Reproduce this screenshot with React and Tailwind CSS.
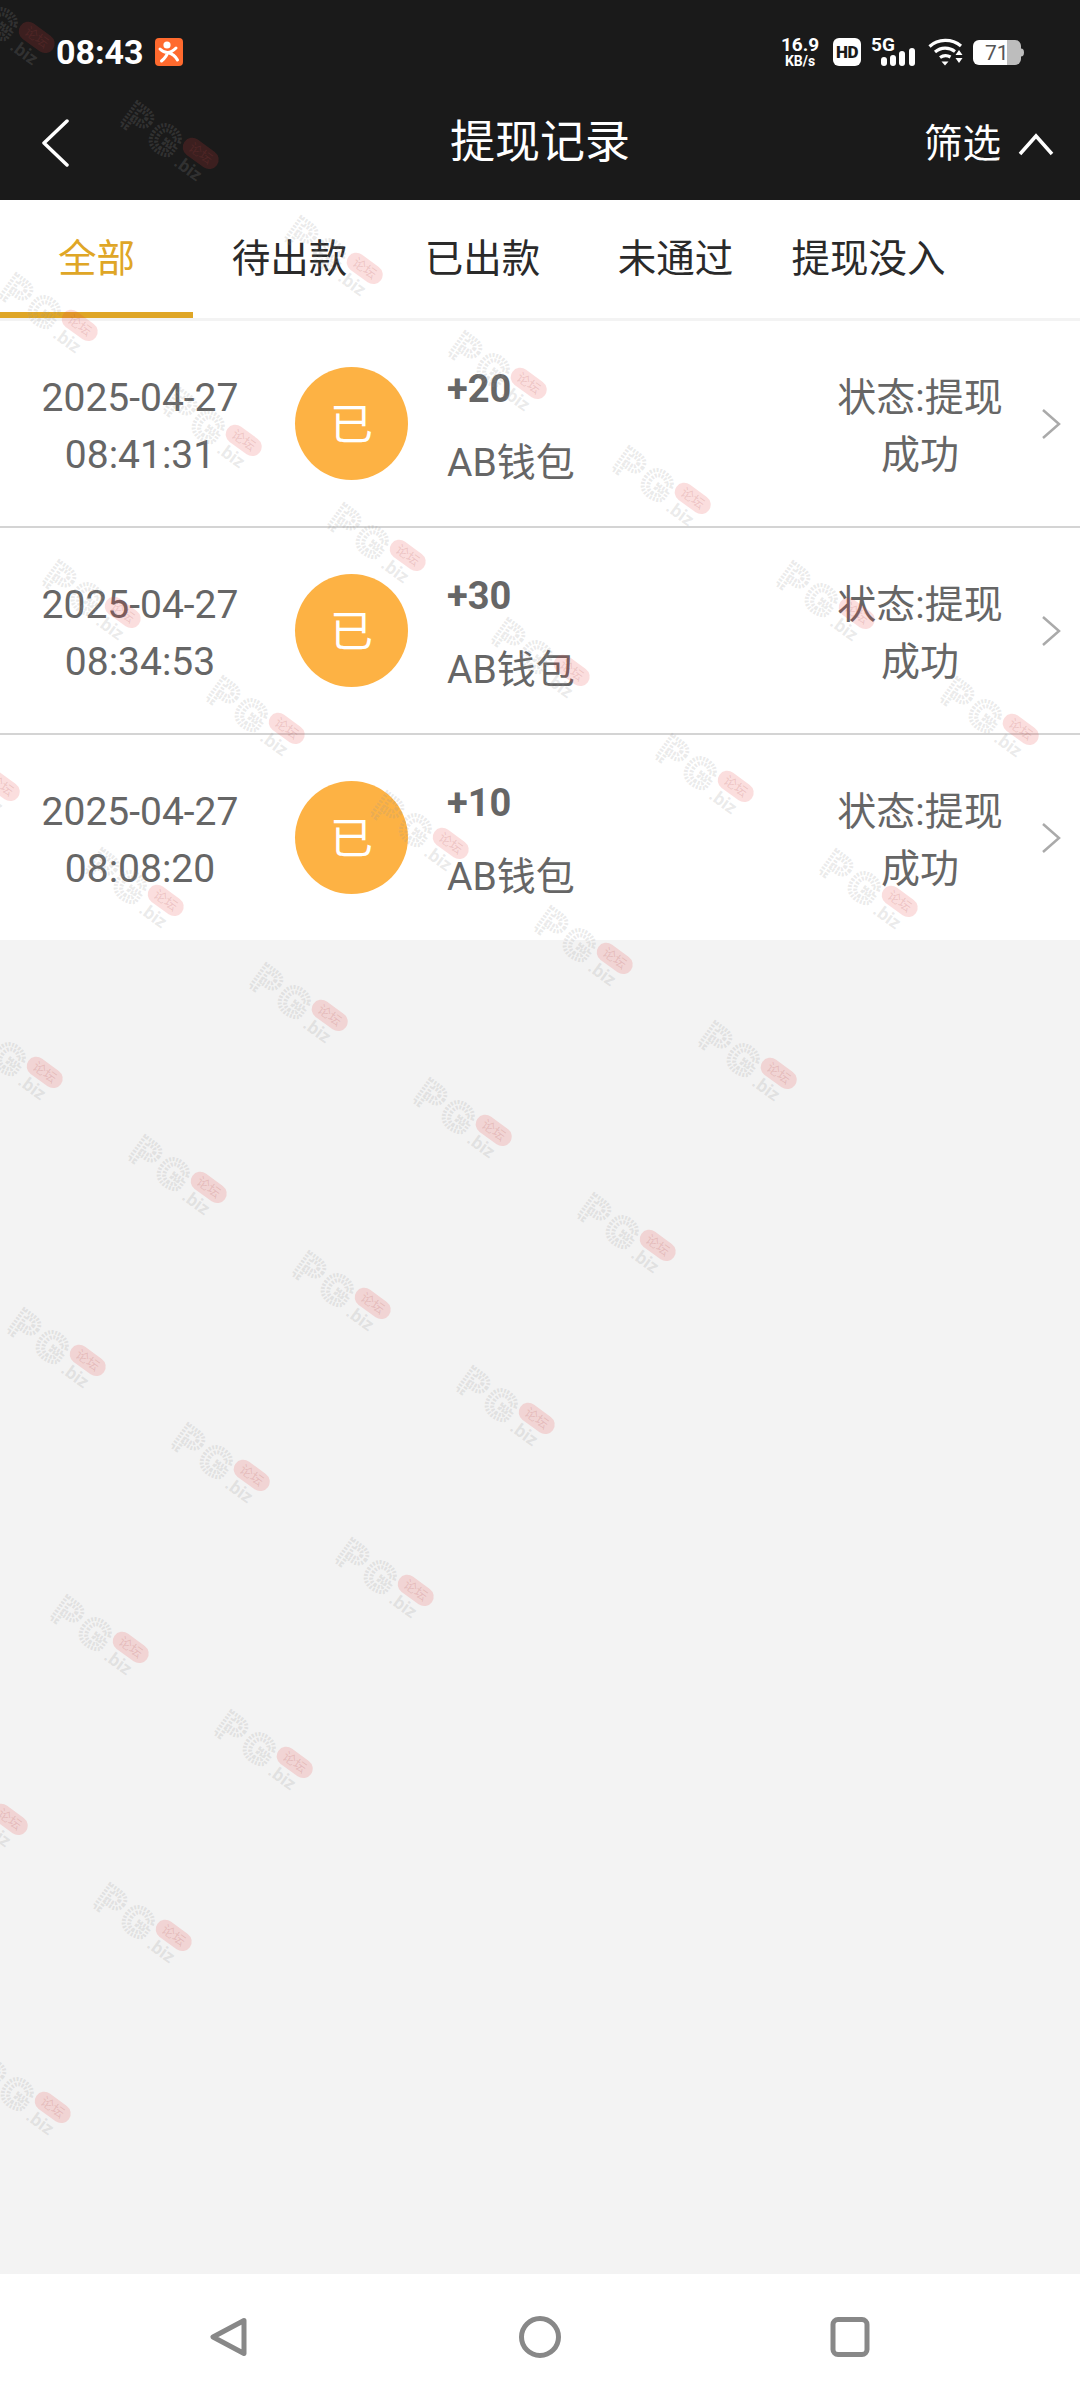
import React from 'react'

const FONT = 'font-["Roboto","Noto_Sans_CJK_SC",sans-serif]'

const records = [
  { amount: '+20', date: '2025-04-27', time: '08:41:31' },
  { amount: '+30', date: '2025-04-27', time: '08:34:53' },
  { amount: '+10', date: '2025-04-27', time: '08:08:20' },
]

const tabs = ['全部', '待出款', '已出款', '未通过', '提现没入']

// watermark sits on a fixed lattice, anchored on the red pill of one tile
function watermarks() {
  const out = []
  for (let n = -3; n <= 5; n++) {
    for (let m = -4; m <= 2; m++) {
      const x = 330 + m * 164 - n * 121
      const y = 1015 + m * 115.2 + n * 172.3
      if (x < -60 || x > 1140 || y < -60) continue
      out.push({ key: `${m}:${n}`, x, y })
    }
  }
  return out
}

function Watermark({ x, y }) {
  return (
    <svg
      width="150"
      height="60"
      viewBox="0 0 150 60"
      className="absolute origin-[110px_20px] rotate-[36deg]"
      style={{ left: x - 110, top: y - 20 }}
    >
      <text
        x="26"
        y="44"
        fontSize="40"
        fontWeight="700"
        fontFamily="Liberation Sans, sans-serif"
        letterSpacing="5"
        fill="none"
        stroke="rgba(150,150,150,0.2)"
        strokeWidth="4"
        strokeDasharray="2 1.5"
      >
        PG
      </text>
      <rect x="90" y="11" width="40" height="19" rx="9.500" fill="rgba(230,60,60,0.17)" />
      <text x="110" y="25" fontSize="13" textAnchor="middle" fontFamily="Noto Sans CJK SC, sans-serif" fill="rgba(170,70,70,0.18)">
        论坛
      </text>
      <text x="94" y="46" fontSize="18" fontWeight="700" fontFamily="Roboto, sans-serif" fill="rgba(150,150,150,0.2)">
        .biz
      </text>
    </svg>
  )
}

function AppIcon() {
  return (
    <svg width="28" height="28" viewBox="0 0 28 28" className="ml-[11px]">
      <rect width="28" height="28" rx="4" fill="#ff6a2e" />
      <circle cx="12" cy="7" r="3.600" fill="#fff" />
      <path d="M5 11c2.500 2.500 5 3.500 7.500 3.500S18 13 21 10M12.500 14.500C12 18 9.500 20.500 6.500 23M12.500 14.500c4 1 8 3.500 10 7.500" fill="none" stroke="#fff" strokeWidth="3" strokeLinecap="round" />
    </svg>
  )
}

function StatusIcons() {
  return (
    <div className="flex items-center">
      <div className="flex w-[42px] flex-col items-center font-bold text-white">
        <span className="text-[19px] leading-[19px]">16.9</span>
        <span className="text-[14px] leading-[15px]">KB/s</span>
      </div>
      <div className="ml-[12px] flex h-[28px] w-[28px] items-center justify-center rounded-[6px] bg-white text-[17px] font-black leading-none tracking-[-0.5px] text-[#1a1a1a]">
        HD
      </div>
      <svg width="46" height="32" viewBox="0 0 46 32" className="ml-[10px]">
        <text x="0" y="15" fontSize="19" fontWeight="700" fontFamily="Roboto, sans-serif" fill="#fff">
          5G
        </text>
        <rect x="10" y="21" width="6" height="9" rx="3" fill="#fff" />
        <rect x="19" y="19" width="6" height="11" rx="3" fill="#fff" />
        <rect x="28" y="15" width="6" height="15" rx="3" fill="#fff" />
        <rect x="38" y="12" width="6" height="18" rx="3" fill="#fff" />
      </svg>
      <svg width="36" height="28" viewBox="0 0 36 28" className="ml-[11px]">
        <g fill="none" stroke="#fff" strokeWidth="3.200">
          <path d="M1.500 8.500C10 .5 24 .5 33 8" />
          <path d="M7 14c6-5 14-5 20-.5" />
          <path d="M12 19.500c3.500-2.500 7-2.500 10.500-.5" />
        </g>
        <path d="M13.500 23.500h7l-3.500 4zM31 12l3.500 5h-7zM27.500 20h7L31 25z" fill="#fff" />
      </svg>
      <svg width="51" height="25" viewBox="0 0 51 25" className="ml-[9px]">
        <path d="M6 0h28v25H6a6 6 0 0 1-6-6V6a6 6 0 0 1 6-6z" fill="#fff" />
        <path d="M34 0h8a6 6 0 0 1 6 6v13a6 6 0 0 1-6 6h-8z" fill="#bdbdbd" />
        <path d="M48 8.500c2 0 3 1.500 3 4s-1 4-3 4z" fill="#bdbdbd" />
        <text x="12" y="20" fontSize="21" fontFamily="Roboto, sans-serif" fill="#555">
          71
        </text>
      </svg>
    </div>
  )
}

function RecordRow({ amount, date, time, last }) {
  return (
    <div className={`flex items-center bg-white ${last ? 'h-[205px]' : 'h-[207px] border-b-2 border-[#d4d4d4]'}`}>
      <div className="flex h-full w-[280px] flex-col items-center justify-center pt-[7px] text-[39px] leading-[57px] text-[#666]">
        <span>{date}</span>
        <span>{time}</span>
      </div>
      <div className="ml-[15px] flex h-[113px] w-[113px] items-center justify-center rounded-full bg-[#fdb244] pt-[4px] text-[43px] text-white">
        已
      </div>
      <div className="ml-[39px] flex w-[340px] flex-col pt-[4px] text-[#666]">
        <span className="text-[38px] font-bold leading-[56px]">{amount}</span>
        <span className="mt-[18px] text-[39px] leading-[56px]">AB钱包</span>
      </div>
      <div className="ml-[45px] flex w-[176px] flex-col items-center pt-[7px] text-[39px] leading-[57px] text-[#666]">
        <span>状态:提现</span>
        <span>成功</span>
      </div>
      <svg width="20" height="32" viewBox="0 0 20 32" className="ml-[33px]">
        <path d="M2 2l16 14L2 30" fill="none" stroke="#aaa" strokeWidth="2.500" />
      </svg>
    </div>
  )
}

export default function App() {
  return (
    <div className={`relative flex h-[2400px] w-[1080px] flex-col overflow-hidden bg-[#f3f3f3] ${FONT}`}>
      <div className="h-[200px] bg-[#1a1a1a] text-white">
        <div className="flex h-[104px] items-center justify-between pl-[56px] pr-[56px]">
          <div className="flex items-center">
            <span className="text-[34px] font-bold leading-none">08:43</span>
            <AppIcon />
          </div>
          <StatusIcons />
        </div>
        <div className="relative flex h-[96px] items-center justify-between pb-[18px] pl-[41px] pr-[26px]">
          <svg width="28" height="48" viewBox="0 0 28 48">
            <path d="M26 2L3 24l23 22" fill="none" stroke="#fff" strokeWidth="3.500" strokeLinecap="round" strokeLinejoin="round" />
          </svg>
          <span className="absolute left-0 right-0 top-[10px] text-center text-[45px] leading-[58px]">提现记录</span>
          <div className="flex items-center pt-[2px]">
            <span className="text-[38.500px] leading-[56px]">筛选</span>
            <svg width="36" height="24" viewBox="0 0 36 24" className="ml-[17px]">
              <path d="M2 22L18 4l16 18" fill="none" stroke="#fff" strokeWidth="3.500" />
            </svg>
          </div>
        </div>
      </div>

      <div className="flex h-[121px] border-b-[3px] border-[#f3f3f3] bg-white">
        {tabs.map((t, i) => (
          <div
            key={t}
            className={`-mb-[1px] flex h-[118px] w-[193px] items-center justify-center border-b-[6px] pt-[6px] text-[38.500px] ${
              i === 0 ? 'border-[#dfa626] text-[#dfa626]' : 'border-transparent text-[#2a2a2a]'
            }`}
          >
            {t}
          </div>
        ))}
      </div>

      <div>
        {records.map((r, i) => (
          <RecordRow key={r.time} {...r} last={i === records.length - 1} />
        ))}
      </div>

      <div className="flex-1" />

      <div className="flex h-[126px] items-center justify-between bg-white pl-[209px] pr-[210px]">
        <svg width="40" height="42" viewBox="0 0 40 42">
          <path d="M35 4.500L4 21l0 0 31 16.500z" fill="none" stroke="#888" strokeWidth="5" strokeLinejoin="round" />
        </svg>
        <svg width="42" height="42" viewBox="0 0 42 42">
          <circle cx="21" cy="21" r="18.500" fill="none" stroke="#888" strokeWidth="5" />
        </svg>
        <svg width="40" height="42" viewBox="0 0 40 42">
          <rect x="3" y="3.500" width="34" height="35" rx="5" fill="none" stroke="#888" strokeWidth="5" />
        </svg>
      </div>

      <div className="pointer-events-none absolute inset-0 overflow-hidden">
        {watermarks().map((w) => (
          <Watermark key={w.key} x={w.x} y={w.y} />
        ))}
      </div>
    </div>
  )
}
